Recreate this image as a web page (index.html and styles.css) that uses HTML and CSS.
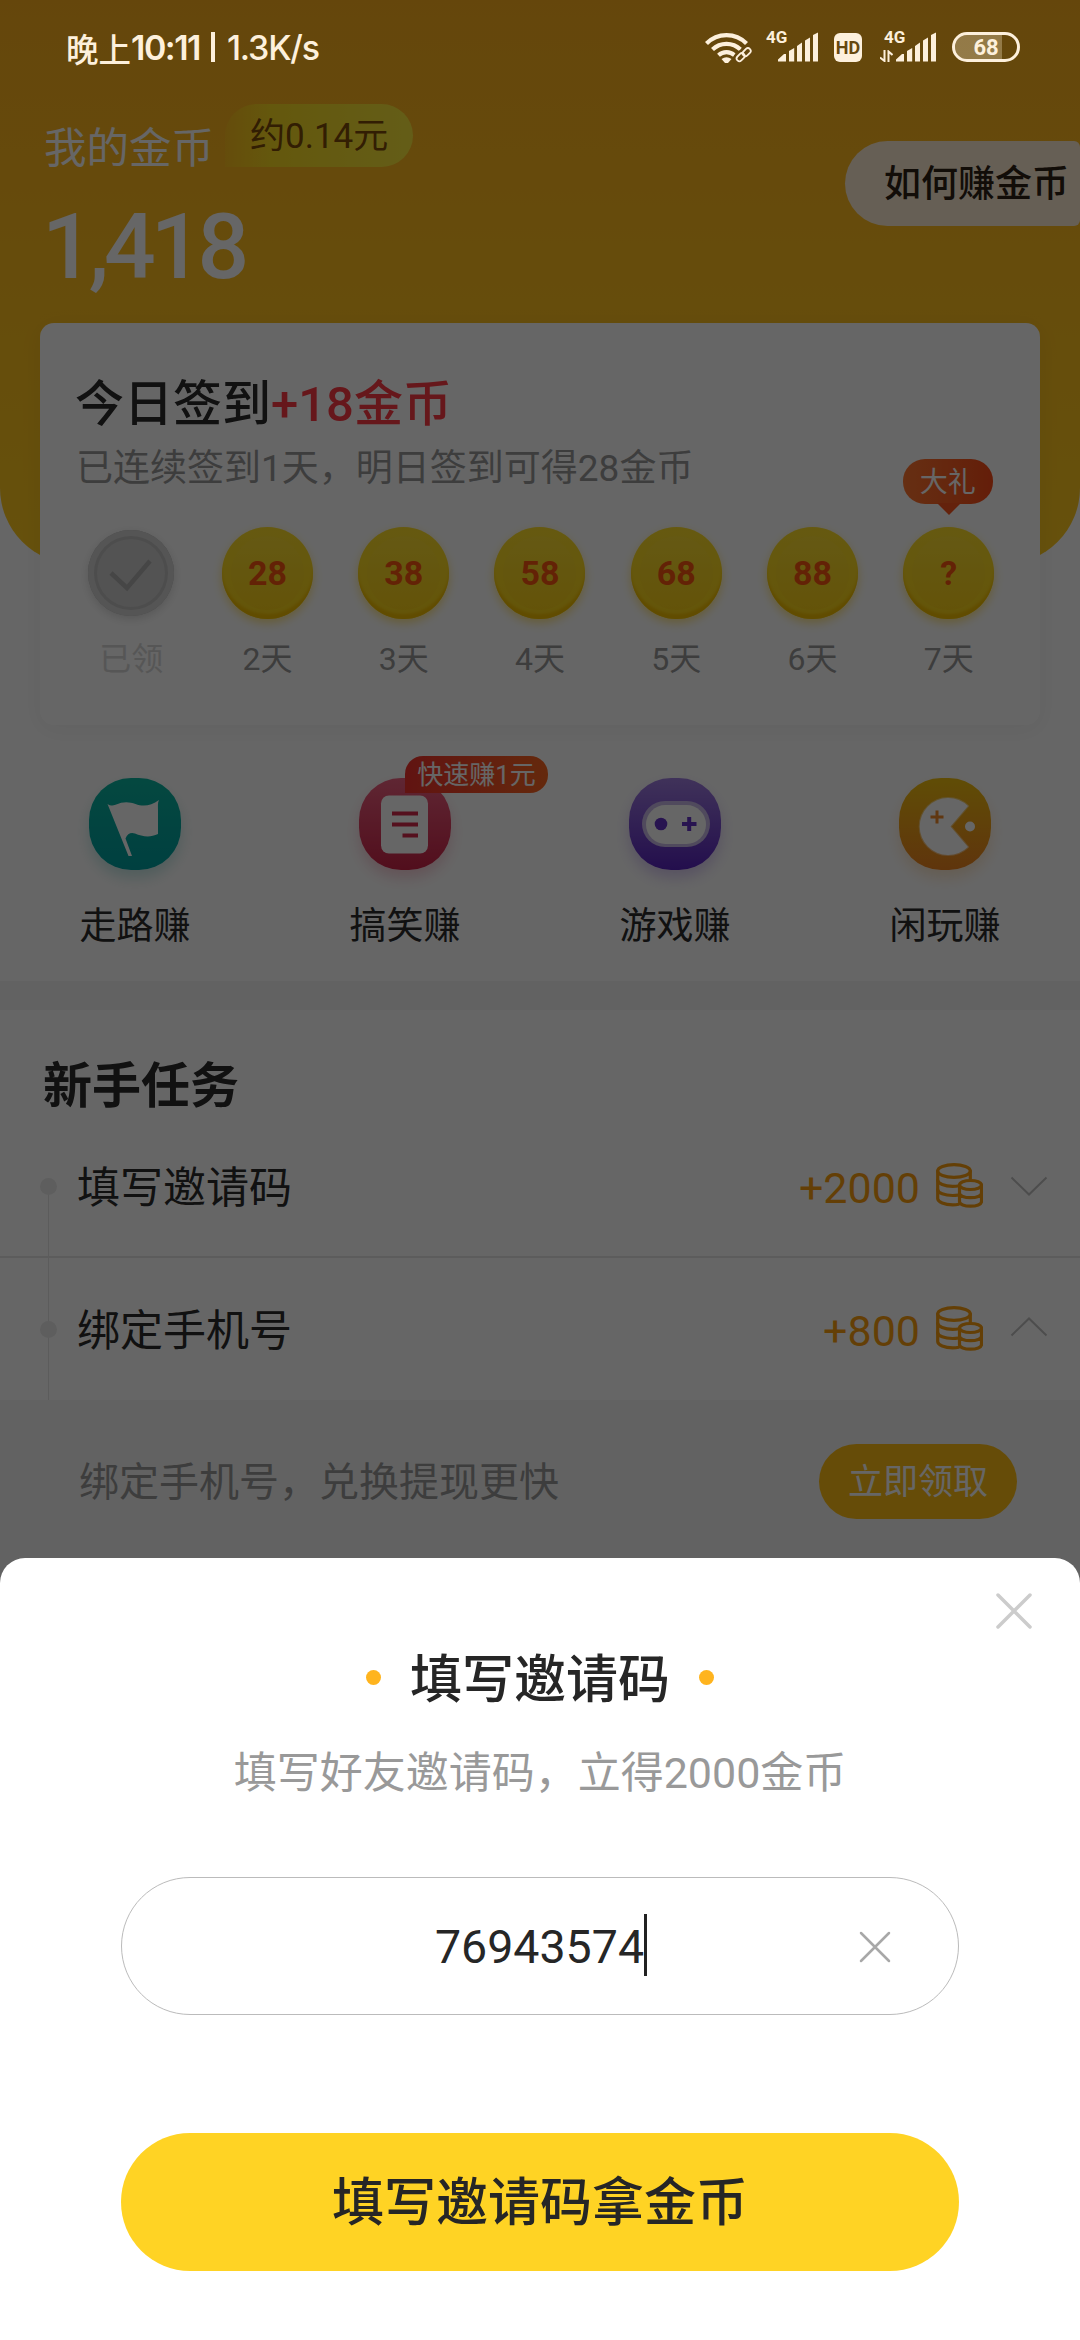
FILE: index.html
```html
<!DOCTYPE html>
<html lang="zh-CN">
<head>
<meta charset="utf-8">
<title>我的金币</title>
<link rel="stylesheet" href="styles.css">
</head>
<body>
<svg class="defs" width="0" height="0" aria-hidden="true">
  <defs>
    <symbol id="coins" viewBox="0 0 47 45">
      <g fill="none" stroke="currentColor" stroke-width="3.2" stroke-linecap="round">
        <ellipse cx="18" cy="8" rx="16.3" ry="6.3"/>
        <path d="M1.7 8v27.500c0 3.600 7 6.300 15 6.300 2.300 0 4.300-.2 6-.6"/>
        <path d="M34.300 8v8M1.700 17c0 3.600 7 6.300 15 6.300 2.500 0 4.500-.2 6.500-.6M1.700 26.500c0 3.600 7 6 15 6 2 0 4-.2 6-.5"/>
        <ellipse cx="34.500" cy="22" rx="11" ry="4.500"/>
        <path d="M23.500 22v16.500c0 2.800 5 4.700 11 4.700s11-1.900 11-4.700V22M23.500 30c0 2.800 5 4.700 11 4.700s11-1.900 11-4.700"/>
      </g>
    </symbol>
    <symbol id="bars" viewBox="0 0 40 30">
      <path fill="currentColor" d="M0 29.500v-2l6-5.500h2v7.500zM11 29.500V19l5.200-3v13.500zM19 29.500V14l5-3.500v19zM27 29.500V8.500l5-3v24zM35 29.500V3l5-2.500v29z"/>
    </symbol>
  </defs>
</svg>

<div class="screen">
  <header class="hero">
    <div class="balance">
      <div class="balance-label"><span>我的金币</span><span class="cash">约0.14元</span></div>
      <div class="balance-num">1,418</div>
    </div>
    <div class="howto">如何赚金币</div>
  </header>

  <section class="sign-card">
    <h2 class="sign-title">今日签到<em>+18金币</em></h2>
    <p class="sign-sub">已连续签到1天，明日签到可得28金币</p>
    <div class="days">
      <div class="day done">
        <div class="coin"><svg width="86" height="86" viewBox="0 0 86 86"><path d="M23 43l16 15 23-27" fill="none" stroke="#aeaeae" stroke-width="4.500"/></svg></div><span>已领</span>
      </div>
      <div class="day"><div class="coin">28</div><span>2天</span></div>
      <div class="day"><div class="coin">38</div><span>3天</span></div>
      <div class="day"><div class="coin">58</div><span>4天</span></div>
      <div class="day"><div class="coin">68</div><span>5天</span></div>
      <div class="day"><div class="coin">88</div><span>6天</span></div>
      <div class="day"><div class="coin">?</div><span>7天</span><b class="gift">大礼</b></div>
    </div>
  </section>

  <nav class="earn">
    <div class="earn-item">
      <div class="earn-icon teal"><svg width="92" height="92" viewBox="0 0 92 92"><path fill="#fff" d="M18.500 26c3 1.800 5 2 8 .8 8-3.800 14-3 20-.8 7 2.600 15 2.500 23.500-4-1.500 3-1 6-1 10v24c-8 4-16 2.500-23-.5-4-1.500-7.500 0-9.500 5L43 78h-3.500z"/></svg></div>
      <span>走路赚</span>
    </div>
    <div class="earn-item">
      <div class="earn-icon pink"><svg width="92" height="92" viewBox="0 0 92 92"><rect x="22" y="17.500" width="47" height="58" rx="8" fill="#fff"/><path d="M33 35.500h26M33 46.500h26M43.500 57.500H59" stroke="#d42a4c" stroke-width="4"/></svg></div>
      <span>搞笑赚</span>
      <b class="fast">快速赚1元</b>
    </div>
    <div class="earn-item">
      <div class="earn-icon purple"><svg width="92" height="92" viewBox="0 0 92 92"><rect x="13" y="23" width="68" height="46" rx="23" fill="#c8b8e8"/><rect x="17" y="27" width="60" height="39" rx="19.500" fill="#fff"/><circle cx="32" cy="46" r="6.300" fill="#6532c8"/><path d="M53 46h14.500M60.200 39v14" stroke="#6532c8" stroke-width="4"/></svg></div>
      <span>游戏赚</span>
    </div>
    <div class="earn-item">
      <div class="earn-icon amber"><svg width="92" height="92" viewBox="0 0 92 92"><path d="M69 28a28.500 28.500 0 1 0 0 41L51.500 48.500z" fill="#fff" stroke="#fff" stroke-opacity=".4" stroke-width="2" stroke-linejoin="round"/><circle cx="71" cy="48.500" r="5" fill="#fff"/><path d="M31.500 39h13M38 32.500v13" stroke="#f08a2c" stroke-width="3"/></svg></div>
      <span>闲玩赚</span>
    </div>
  </nav>

  <section class="tasks">
    <h2 class="tasks-title">新手任务</h2>
    <div class="task first">
      <i class="dot"></i><span class="name">填写邀请码</span><span class="reward">+2000</span>
      <svg class="stack" width="47" height="45"><use href="#coins"/></svg>
      <svg class="chev" width="38" height="20" viewBox="0 0 38 20"><path d="M1.500 1.500L19 18.500 36.500 1.500" fill="none" stroke="#c0c0c0" stroke-width="2"/></svg>
    </div>
    <div class="task">
      <i class="dot"></i><span class="name">绑定手机号</span><span class="reward">+800</span>
      <svg class="stack" width="47" height="45"><use href="#coins"/></svg>
      <svg class="chev up" width="38" height="20" viewBox="0 0 38 20"><path d="M1.500 18.500L19 1.500 36.500 18.500" fill="none" stroke="#c0c0c0" stroke-width="2"/></svg>
    </div>
    <div class="detail"><span>绑定手机号，兑换提现更快</span><span class="claim">立即领取</span></div>
  </section>
</div>

<div class="mask"></div>

<div class="status">
  <div class="status-left"><span class="cn">晚上</span><span class="clock">10:11</span><i class="bar"></i><span class="speed">1.3K/s</span></div>
  <div class="status-right">
    <svg class="wifi" width="48" height="31" viewBox="0 0 48 31">
      <g fill="none" stroke="currentColor" stroke-width="4.200">
        <path d="M1.500 11.500a28 28 0 0 1 40 0"/><path d="M7.500 17.500a20 20 0 0 1 28 0"/><path d="M13.500 23.200a12 12 0 0 1 16 0"/>
      </g>
      <path d="M16.500 27q5-3.500 10 0l-3.500 4h-3z" fill="currentColor"/>
      <g fill="none" stroke="#65470e" stroke-width="6"><rect x="31" y="22" width="9" height="6" rx="3" transform="rotate(-45 35.500 25)"/><rect x="37" y="17" width="9" height="6" rx="3" transform="rotate(-45 41.500 20)"/></g>
      <g fill="none" stroke="currentColor" stroke-width="1.800"><rect x="31" y="22.500" width="9" height="5.500" rx="2.700" transform="rotate(-45 35.500 25)"/><rect x="37" y="17.500" width="9" height="5.500" rx="2.700" transform="rotate(-45 41.500 20)"/></g>
    </svg>
    <div class="cell"><span>4G</span><svg width="40" height="30"><use href="#bars"/></svg></div>
    <div class="hd"><span>HD</span></div>
    <div class="cell"><span>4G</span><svg class="updown" width="13" height="12" viewBox="0 0 13 12"><path d="M4.500 0v11L0 7.500M8.500 12V1.500L12.500 5" fill="none" stroke="currentColor" stroke-width="2"/></svg><svg width="40" height="30"><use href="#bars"/></svg></div>
    <div class="battery">68</div>
  </div>
</div>

<div class="sheet">
  <svg class="close" width="38" height="38" viewBox="0 0 38 38"><path d="M3 3l32 32M35 3L3 35" stroke="#ccc" stroke-width="3.500" stroke-linecap="round"/></svg>
  <h1 class="sheet-title"><i></i><span>填写邀请码</span><i></i></h1>
  <p class="sheet-sub">填写好友邀请码，立得2000金币</p>
  <div class="field"><span class="code">76943574</span><i class="caret"></i>
    <svg class="clear" width="32" height="32" viewBox="0 0 32 32"><path d="M2 2l28 28M30 2L2 30" stroke="#a8a8a8" stroke-width="2.500" stroke-linecap="round"/></svg>
  </div>
  <div class="submit">填写邀请码拿金币</div>
</div>
</body>
</html>
```
FILE: styles.css
```css
* { box-sizing: border-box; }
body {
  margin: 0;
  width: 1080px;
  height: 2340px;
  overflow: hidden;
  position: relative;
  background: #fff;
  color: #333;
  font-family: Roboto, "Noto Sans CJK SC", sans-serif;
}
h1, h2, p { margin: 0; font-weight: 500; }
i, em { font-style: normal; }
svg { display: block; flex: none; }
.defs { position: absolute; }

.screen { height: 1600px; overflow: hidden; }

/* header */
.hero {
  height: 564px;
  padding: 104px 0 0 44px;
  display: flex;
  justify-content: space-between;
  background: linear-gradient(#fdb020, #ffc220 60%, #ffcb20);
  border-radius: 0 0 76px 76px;
  color: #fff;
}
.balance-label { display: flex; font-size: 42.5px; line-height: 48px; gap: 11px; }
.balance-label > span:first-child { padding-top: 21px; }
.balance-label > .cash {
  height: 63px;
  padding: 1px 25px 0;
  border-radius: 32px 32px 32px 0;
  background: linear-gradient(90deg, rgba(250, 220, 20, .2), #fbdc22 25%, #fbe93c);
  color: #7d4b08;
  font-size: 35px;
  line-height: 63px;
}
.balance-num { margin-top: 21px; font-size: 91px; font-weight: 500; line-height: 106px; letter-spacing: -5px; text-indent: -2px; }
.howto {
  margin-top: 37px;
  width: 235px;
  height: 85px;
  padding: 2px 0 0 39px;
  border-radius: 43px 6px 6px 43px;
  background: #ffeed4;
  color: #2d2215;
  font-size: 37px;
  font-weight: 500;
  line-height: 83px;
}

/* sign-in card */
.sign-card {
  position: relative;
  margin: -241px 40px 0;
  height: 402px;
  padding: 46px 23px 0;
  border-radius: 14px;
  background: #fff;
  box-shadow: 0 4px 24px rgba(0, 0, 0, .05);
}
.sign-title { padding-left: 12px; font-size: 49px; line-height: 72px; color: #2b2b2b; }
.sign-title em { color: #ff3b45; }
.sign-sub { padding-left: 13px; font-size: 37px; line-height: 56px; font-weight: 400; color: #999; }
.days { display: flex; margin-top: 30px; }
.day { position: relative; flex: 1; display: flex; flex-direction: column; align-items: center; font-size: 32px; line-height: 40px; color: #999; }
.coin {
  width: 91px;
  height: 92px;
  margin-bottom: 20px;
  border-radius: 50%;
  background: linear-gradient(#fde034, #f8ce14);
  box-shadow: inset 0 -6px 3px -1px #f2be00, inset 0 0 0 9px rgba(255, 222, 30, .4), 0 4px 10px rgba(255, 215, 60, .6);
  color: #f8560f;
  font-size: 34px;
  font-weight: 700;
  line-height: 92px;
  text-align: center;
}
.done { color: #d8d8d8; }
.done .coin {
  width: 86px;
  height: 86px;
  margin: 3px 0 23px;
  background: #cfcfcf;
  box-shadow: inset 0 0 0 6px #d4d4d4, inset 0 0 0 9px #c0c0c0, 0 3px 10px rgba(0, 0, 0, .15);
}
.gift {
  position: absolute;
  top: -68px;
  left: 22px;
  width: 90px;
  height: 45px;
  border-radius: 22px;
  background: linear-gradient(90deg, #ff7630, #fa4b18);
  color: #fff;
  font-size: 28px;
  font-weight: 400;
  line-height: 48px;
  text-align: center;
}
.gift::after {
  content: "";
  position: absolute;
  left: 34px;
  top: 44px;
  border: 12px solid transparent;
  border-top: 12px solid #fb5620;
  border-bottom: 0;
}

/* shortcuts */
.earn { display: flex; padding-top: 53px; height: 256px; }
.earn-item { position: relative; flex: 1; display: flex; flex-direction: column; align-items: center; font-size: 37px; line-height: 54px; color: #2b2b2b; }
.earn-icon { width: 92px; height: 92px; margin-bottom: 30px; border-radius: 42px; }
.teal { background: linear-gradient(#0cb4a0, #00a0a0); box-shadow: 0 8px 14px rgba(0, 150, 140, .22); }
.pink { background: linear-gradient(#ee6080, #cc2448); box-shadow: 0 8px 14px rgba(220, 40, 80, .22); }
.purple { background: linear-gradient(#a07ee0, #5824c0); box-shadow: 0 8px 14px rgba(110, 60, 210, .25); }
.amber { background: linear-gradient(#f0c010, #ee8420); box-shadow: 0 8px 14px rgba(240, 150, 30, .22); }
.fast {
  position: absolute;
  left: 135px;
  top: -22px;
  height: 37px;
  width: 143px;
  border-radius: 18px 18px 18px 0;
  background: linear-gradient(90deg, #f2322c, #fb6620);
  color: #fff;
  font-size: 26px;
  font-weight: 400;
  line-height: 39px;
  text-align: center;
}

/* tasks */
.tasks { border-top: 29px solid #f5f5f5; }
.tasks-title { height: 106px; padding: 41px 0 0 43px; font-size: 49px; line-height: 72px; font-weight: 700; color: #2b2b2b; }
.task {
  position: relative;
  display: flex;
  align-items: center;
  height: 142px;
  padding: 0 32px 0 40px;
  font-size: 43px;
  color: #2b2b2b;
}
.task.first { border-bottom: 2px solid #e6e6e6; }
.task::before { content: ""; position: absolute; left: 48px; top: 0; width: 1px; height: 142px; background: #e6e6e6; }
.task.first::before { top: 71px; height: 72px; }
.dot { position: relative; width: 17px; height: 17px; border-radius: 50%; background: #ebebeb; }
.name { margin: -5px 0 0 20px; flex: 1; }
.reward { padding-top: 3px; color: #fa9f10; }
.stack { margin: -2px 27px 0 16px; color: #fa9f10; }
.chev { margin-top: -1px; }
.chev.up { margin-top: -5px; }
.detail {
  display: flex;
  justify-content: space-between;
  align-items: center;
  height: 300px;
  padding: 0 63px 138px 79px;
  background: #f5f5f5;
  font-size: 40px;
  color: #999;
}
.detail > span:first-child { margin-top: -4px; }
.claim {
  width: 198px;
  height: 75px;
  border-radius: 38px;
  background: #ffbe14;
  color: #fff;
  font-size: 35px;
  line-height: 78px;
  text-align: center;
}

.mask { position: absolute; inset: 0; background: rgba(0, 0, 0, .6); }

/* status bar */
.status {
  position: absolute;
  top: 0;
  left: 0;
  width: 1080px;
  height: 96px;
  padding: 0 60px 2px 66px;
  display: flex;
  justify-content: space-between;
  align-items: center;
  color: #fdf0dc;
}
.status-left { display: flex; align-items: center; font-family: Inter, "Noto Sans CJK SC", sans-serif; font-weight: 500; font-size: 34px; }
.status-left .cn { font-size: 32.5px; }
.status-left .clock { letter-spacing: -1.5px; font-weight: 600; }
.status-left .speed { letter-spacing: -1.2px; }
.status-left .bar { width: 4px; height: 30px; margin: 0 12px 0 11px; background: currentColor; }
.status-right { display: flex; align-items: center; }
.cell { position: relative; display: flex; width: 52px; height: 30px; justify-content: flex-end; }
.cell span { position: absolute; left: 0; top: -3px; font-size: 17px; line-height: 17px; font-weight: 700; }
.updown { position: absolute; left: -4px; bottom: 0; }
.wifi { margin-right: 13px; }
.hd {
  width: 28px;
  height: 29px;
  margin: 0 22px 0 16px;
  border-radius: 6px;
  background: currentColor;
  font-size: 18px;
  font-weight: 700;
  line-height: 29px;
  text-align: center;
}
.hd span { color: #65470e; }
.battery {
  width: 68px;
  height: 30px;
  margin-left: 16px;
  border: 3px solid currentColor;
  border-radius: 15px;
  background: linear-gradient(90deg, rgba(255, 240, 210, .3) 76%, transparent 76%) padding-box;
  font-size: 22px;
  font-weight: 700;
  line-height: 25px;
  text-align: center;
}

/* bottom sheet */
.sheet {
  position: absolute;
  left: 0;
  top: 1558px;
  width: 1080px;
  height: 782px;
  padding: 80px 121px 0;
  border-radius: 25px 25px 0 0;
  background: #fff;
  color: #262626;
}
.close { position: absolute; right: 47px; top: 34px; }
.sheet-title { display: flex; justify-content: center; align-items: center; gap: 29px; font-size: 52px; line-height: 78px; }
.sheet-title span { padding-top: 4px; margin-bottom: -4px; }
.sheet-title i { width: 15px; height: 15px; border-radius: 50%; background: #ffb41e; }
.sheet-sub { margin-top: 25px; font-size: 43px; line-height: 64px; font-weight: 400; color: #999; text-align: center; }
.field {
  position: relative;
  display: flex;
  justify-content: center;
  align-items: center;
  height: 138px;
  margin-top: 72px;
  padding: 2px 0 0 2px;
  border: 1px solid #bbb;
  border-radius: 69px;
  font-size: 46.5px;
}
.caret { width: 3px; height: 62px; margin-top: -4px; background: #222; }
.clear { position: absolute; right: 67px; top: 53px; }
.submit {
  height: 138px;
  margin-top: 118px;
  border-radius: 69px;
  background: #ffd324;
  font-size: 52px;
  font-weight: 500;
  line-height: 141px;
  text-align: center;
}
```
